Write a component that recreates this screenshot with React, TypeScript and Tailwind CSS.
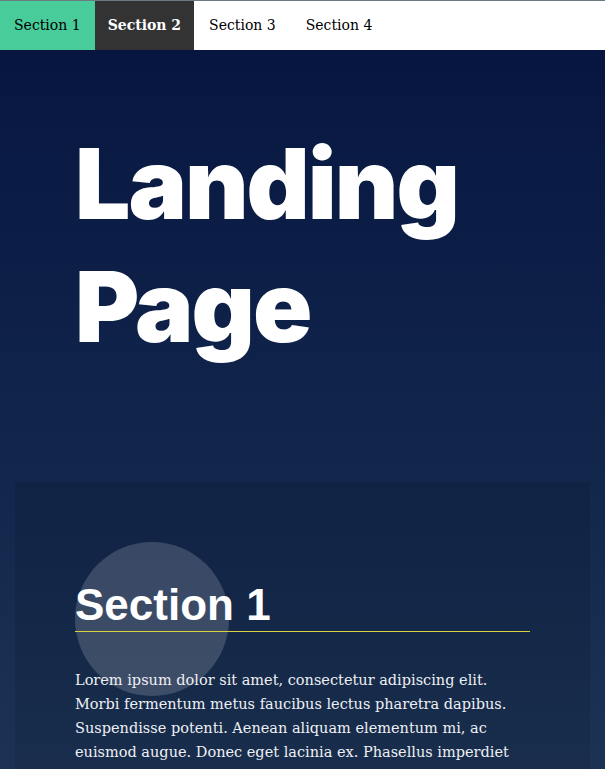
const navItems = [
  { label: "Section 1", cls: "bg-[#48cc9a] text-black px-[14px]" },
  { label: "Section 2", cls: "bg-[#333333] text-white font-bold px-[13px]" },
  { label: "Section 3", cls: "bg-white text-black px-[15px]" },
  { label: "Section 4", cls: "bg-white text-black px-[15px]" },
];

const serif = "font-['DejaVu_Serif',serif]";

export default function App() {
  return (
    <div className="min-h-[769px] w-full bg-gradient-to-b from-[#06143f] to-[#1f3658] overflow-hidden">
      {/* Top navigation */}
      <nav className={`flex h-[50px] bg-white border-t border-[#6b7a80] ${serif}`}>
        {navItems.map((item) => (
          <a
            key={item.label}
            className={`flex items-center text-[14px] ${item.cls}`}
          >
            {item.label}
          </a>
        ))}
      </nav>

      {/* Hero */}
      <header className="h-[432px] px-[75px] pt-[72px]">
        <h1 className="font-['Inter',sans-serif] font-black text-white text-[98px] leading-[123px] tracking-[-2px]">
          Landing
          <br />
          Page
        </h1>
      </header>

      {/* Section card */}
      <section className="relative mx-[15px] bg-black/10 px-[60px] pt-[60px] pb-[60px]">
        <div className="absolute left-[60px] top-[60px] w-[154px] h-[154px] rounded-full bg-white/[0.17]" />
        <h2 className="relative pt-[38px] pb-[1px] border-b border-[#d8d23c] font-['Liberation_Sans',sans-serif] font-bold text-white text-[44px] leading-[50px]">
          Section 1
        </h2>
        <p className={`relative mt-[36px] text-[14.5px] leading-[24px] text-[#eef0f4] ${serif}`}>
          Lorem ipsum dolor sit amet, consectetur adipiscing elit. Morbi
          fermentum metus faucibus lectus pharetra dapibus. Suspendisse
          potenti. Aenean aliquam elementum mi, ac euismod augue. Donec eget
          lacinia ex. Phasellus imperdiet porta orci eget mollis. Sed
          convallis sollicitudin mauris ac tincidunt.
        </p>
      </section>
    </div>
  );
}
